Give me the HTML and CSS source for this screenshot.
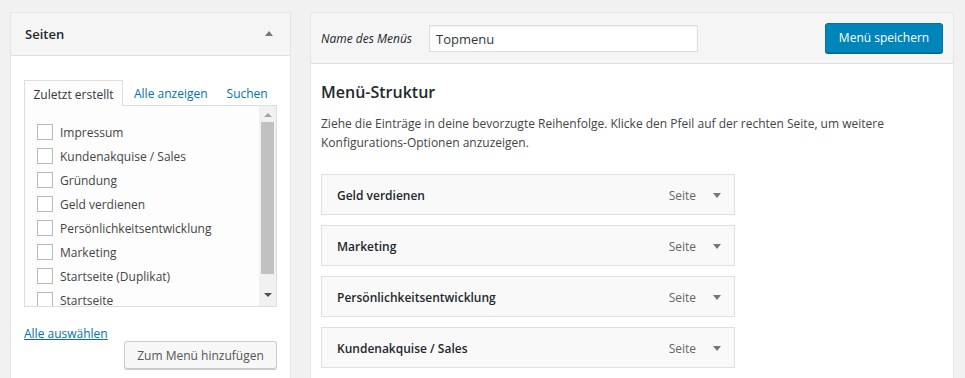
FILE: index.html
```html
<!DOCTYPE html>
<html lang="de">
<head>
<meta charset="utf-8">
<title>Menüs</title>
<link rel="stylesheet" href="styles.css">
</head>
<body>
<div class="page">
  <div class="side">
    <div class="box">
      <div class="box-head">
        <h3 class="box-title">Seiten</h3>
        <span class="caret-up"></span>
      </div>
      <div class="box-body">
        <ul class="tabs">
          <li class="tab tab-active">Zuletzt erstellt</li>
          <li class="tab"><a class="link" href="#">Alle anzeigen</a></li>
          <li class="tab"><a class="link" href="#">Suchen</a></li>
        </ul>
        <div class="tab-panel">
          <ul class="checklist">
            <li class="check-row"><span class="checkbox"></span><span class="check-label">Impressum</span></li>
            <li class="check-row"><span class="checkbox"></span><span class="check-label">Kundenakquise / Sales</span></li>
            <li class="check-row"><span class="checkbox"></span><span class="check-label">Gründung</span></li>
            <li class="check-row"><span class="checkbox"></span><span class="check-label">Geld verdienen</span></li>
            <li class="check-row"><span class="checkbox"></span><span class="check-label">Persönlichkeitsentwicklung</span></li>
            <li class="check-row"><span class="checkbox"></span><span class="check-label">Marketing</span></li>
            <li class="check-row"><span class="checkbox"></span><span class="check-label">Startseite (Duplikat)</span></li>
            <li class="check-row"><span class="checkbox"></span><span class="check-label">Startseite</span></li>
          </ul>
          <div class="scrollbar">
            <span class="sb-up"></span>
            <span class="sb-thumb"></span>
            <span class="sb-down"></span>
          </div>
        </div>
        <p class="select-all"><a class="link underline" href="#">Alle auswählen</a></p>
        <div class="actions"><button class="btn">Zum Menü hinzufügen</button></div>
      </div>
    </div>
  </div>
  <div class="main">
    <div class="main-head">
      <label class="name-label">Name des Menüs</label>
      <div class="name-input">Topmenu</div>
      <button class="btn-primary">Menü speichern</button>
    </div>
    <div class="main-body">
      <h2 class="struct-title">Menü-Struktur</h2>
      <p class="struct-text">Ziehe die Einträge in deine bevorzugte Reihenfolge. Klicke den Pfeil auf der rechten Seite, um weitere<br>Konfigurations-Optionen anzuzeigen.</p>
      <ul class="menu-items">
        <li class="menu-item"><span class="item-title">Geld verdienen</span><span class="item-type">Seite</span><span class="caret-down"></span></li>
        <li class="menu-item"><span class="item-title">Marketing</span><span class="item-type">Seite</span><span class="caret-down"></span></li>
        <li class="menu-item"><span class="item-title">Persönlichkeitsentwicklung</span><span class="item-type">Seite</span><span class="caret-down"></span></li>
        <li class="menu-item"><span class="item-title">Kundenakquise / Sales</span><span class="item-type">Seite</span><span class="caret-down"></span></li>
      </ul>
    </div>
  </div>
</div>
</body>
</html>
```

FILE: styles.css
```css
* { box-sizing: border-box; }
html, body { margin: 0; padding: 0; }
body {
  background: #f1f1f1;
  font-family: "Open Sans", "Noto Sans", sans-serif;
  font-size: 12px;
  color: #444;
  height: 378px;
  overflow: hidden;
}
ul { list-style: none; margin: 0; padding: 0; }
p, h2, h3 { margin: 0; }

.page {
  display: flex;
  align-items: flex-start;
  gap: 19px;
  padding: 12px 0 0 10px;
}

/* left box */
.side { width: 281px; }
.box {
  background: #fff;
  border: 1px solid #e5e5e5;
  border-bottom: none;
  height: 366px;
  overflow: hidden;
}
.box-head {
  height: 43px;
  background: #f5f5f5;
  border-bottom: 1px solid #dfdfdf;
  display: flex;
  align-items: center;
  justify-content: space-between;
  padding: 0 17px 0 14px;
}
.box-title {
  font-size: 13px;
  font-weight: 600;
  color: #23282d;
}
.caret-up {
  width: 0; height: 0;
  border-left: 4px solid transparent;
  border-right: 4px solid transparent;
  border-bottom: 5px solid #72777c;
  margin-top: -1px;
}
.box-body { padding: 24px 13px 0 13px; }

.tabs {
  display: flex;
  align-items: flex-end;
  height: 25px;
}
.tab {
  height: 25px;
  display: flex;
  align-items: center;
  font-size: 12px;
  white-space: nowrap;
  padding-top: 1px;
}
.tab-active {
  width: 99px;
  justify-content: center;
  border: 1px solid #ddd;
  border-bottom: none;
  background: #fdfdfd;
  color: #32373c;
  position: relative;
  z-index: 1;
  margin-bottom: -1px;
  height: 26px;
}
.tab + .tab { padding-left: 11px; }
.tab:last-child { padding-left: 19px; }
.link { color: #0073aa; text-decoration: none; }
.underline { text-decoration: underline; }

.tab-panel {
  border: 1px solid #ddd;
  background: #fdfdfd;
  height: 202px;
  display: flex;
  overflow: hidden;
}
.checklist {
  flex: 1;
  padding: 18px 0 0 12px;
}
.check-row {
  display: flex;
  align-items: center;
  height: 16px;
  margin: 0 0 8px 0;
}
.checkbox {
  width: 16px; height: 16px;
  border: 1px solid #b4b9be;
  background: #fff;
  margin-right: 7px;
  flex: none;
}
.check-label { color: #444; white-space: nowrap; }

.scrollbar {
  width: 17px;
  flex: none;
  background: #f1f1f1;
  display: flex;
  flex-direction: column;
  align-items: center;
}
.sb-up, .sb-down {
  width: 0; height: 0;
  border-left: 4px solid transparent;
  border-right: 4px solid transparent;
}
.sb-up { border-bottom: 4px solid #a3a3a3; margin-top: 7px; }
.sb-down { border-top: 4px solid #505050; margin-top: 19px; }
.sb-thumb {
  width: 13px;
  height: 152px;
  background: #c1c1c1;
  margin-top: 5px;
}

.select-all {
  margin-top: 18px;
  height: 17px;
  line-height: 17px;
  font-size: 12px;
}
.actions {
  display: flex;
  justify-content: flex-end;
  margin-top: -1px;
}
.btn {
  height: 28px;
  width: 153px;
  font-family: inherit;
  font-size: 12px;
  color: #555;
  background: #f7f7f7;
  border: 1px solid #ccc;
  border-radius: 3px;
  box-shadow: 0 1px 0 #ccc;
  padding: 0 10px;
}

/* main */
.main {
  width: 644px;
  background: #fff;
  border: 1px solid #e5e5e5;
  border-bottom: none;
  height: 366px;
  overflow: hidden;
}
.main-head {
  height: 51px;
  background: #f5f5f5;
  border-bottom: 1px solid #dfdfdf;
  display: flex;
  align-items: center;
  padding: 0 10px 0 10px;
}
.name-label {
  font-style: italic;
  color: #23282d;
  font-size: 12px;
  width: 108px;
}
.name-input {
  width: 269px;
  height: 27px;
  border: 1px solid #ddd;
  background: #fff;
  box-shadow: inset 0 1px 2px rgba(0,0,0,.07);
  font-size: 13px;
  color: #32373c;
  padding: 0 0 0 6px;
  display: flex;
  align-items: center;
  margin-top: 1px;
}
.btn-primary {
  margin-left: auto;
  width: 118px;
  height: 30px;
  background: #0085ba;
  border: 1px solid #0073aa;
  border-radius: 3px;
  box-shadow: 0 1px 0 #006799;
  color: #fff;
  font-family: inherit;
  font-size: 12px;
  padding: 0;
  margin-top: -1px;
}
.main-body { padding: 16px 10px 0 10px; }
.struct-title {
  font-size: 16px;
  font-weight: 600;
  color: #23282d;
  line-height: 24px;
}
.struct-text {
  margin-top: 10px;
  line-height: 19px;
  color: #444;
}
.menu-items {
  margin-top: 22px;
  display: flex;
  flex-direction: column;
  gap: 10px;
}
.menu-item {
  width: 414px;
  height: 41px;
  background: #f9f9f9;
  border: 1px solid #dfdfdf;
  display: flex;
  align-items: center;
  padding: 1px 13px 0 15px;
}
.item-title {
  font-weight: 600;
  color: #23282d;
  flex: 1;
}
.item-type { color: #666; margin-right: 17px; }
.caret-down {
  width: 0; height: 0;
  border-left: 4px solid transparent;
  border-right: 4px solid transparent;
  border-top: 5px solid #72777c;
}
```
